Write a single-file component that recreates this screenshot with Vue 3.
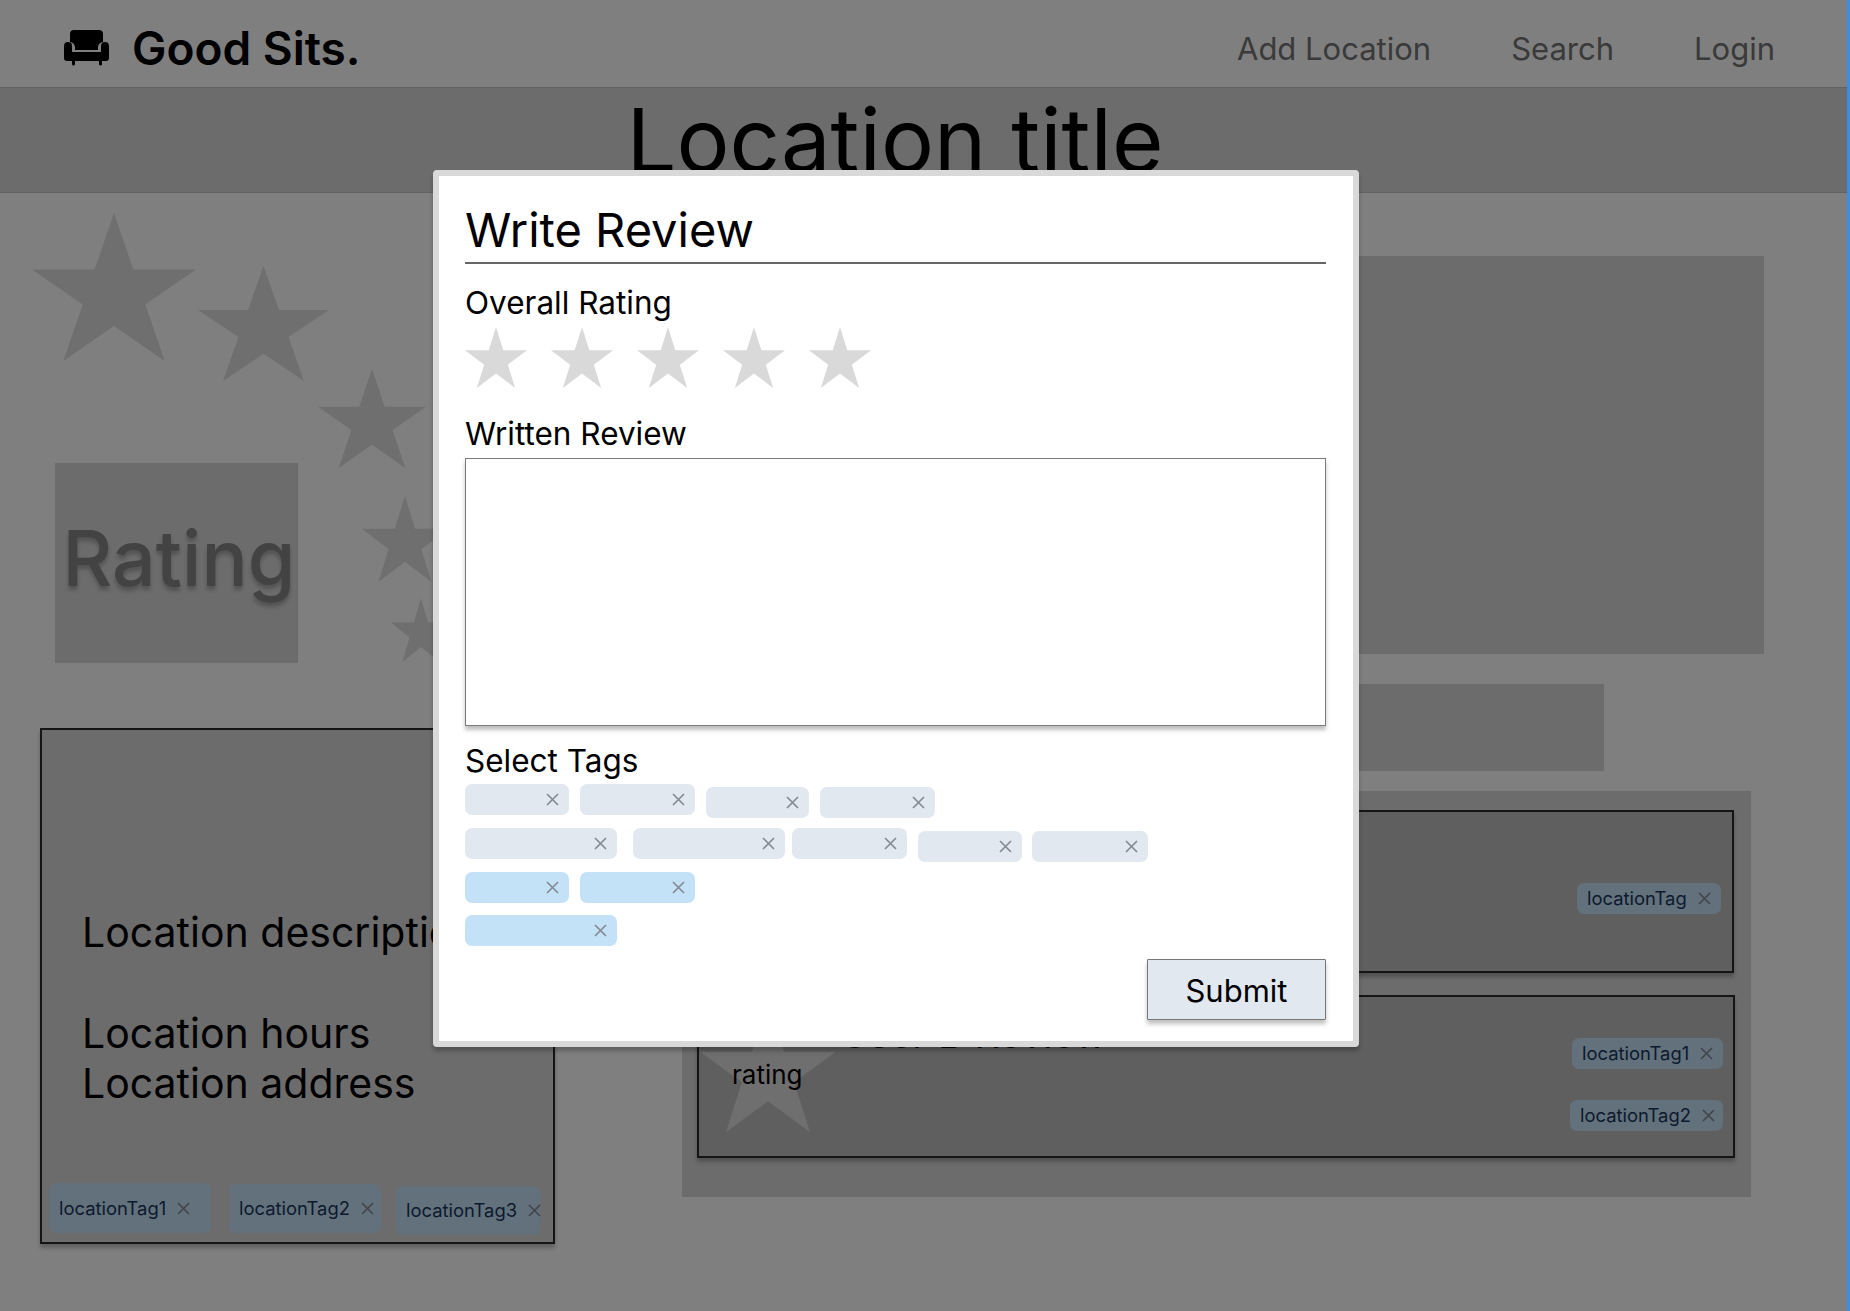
<script setup>
import { ref } from "vue";

const heroStars = [
  { x: 32, y: 20, w: 164, h: 148 },
  { x: 198, y: 73, w: 131, h: 115 },
  { x: 318, y: 176, w: 108, h: 99 },
  { x: 362, y: 303, w: 86, h: 86 },
  { x: 391, y: 405, w: 60, h: 64 }
];

const locationTags = [
  { label: "locationTag1", width: 162, height: 50, left: 0, top: 0 },
  { label: "locationTag2", width: 152, height: 49, left: 18, top: 1 },
  { label: "locationTag3", width: 144, height: 49, left: 15, top: 3 }
];

const tagRows = ref([
  [
    { width: 104 },
    { width: 115, left: 11 },
    { width: 103, left: 11, top: 3 },
    { width: 115, left: 11, top: 3 }
  ],
  [
    { width: 152 },
    { width: 152, left: 16 },
    { width: 115, left: 7 },
    { width: 104, left: 11, top: 3 },
    { width: 116, left: 10, top: 3 }
  ],
  [
    { width: 104, active: true },
    { width: 115, left: 11, active: true }
  ],
  [{ width: 152, active: true }]
]);

function tagStyle(tag) {
  return {
    width: `${tag.width}px`,
    marginLeft: `${tag.left || 0}px`,
    marginTop: `${tag.top || 0}px`
  };
}
</script>

<template>
  <div class="page">
    <header class="nav">
      <div class="brand">
        <svg class="brand__icon" viewBox="0 0 45 36" aria-hidden="true">
          <path d="M10 0h25a4 4 0 0 1 4 4v8a6 6 0 0 0-5 5v3H11v-3a6 6 0 0 0-5-5V4a4 4 0 0 1 4-4z" />
          <path d="M4 12a4 4 0 0 1 4 4v6h29v-6a4 4 0 0 1 8 0v12a3 3 0 0 1-3 3h-4v3a1.500 1.500 0 0 1-3 0v-3H11v3a1.500 1.500 0 0 1-3 0v-3H3a3 3 0 0 1-3-3V16a4 4 0 0 1 4-4z" />
        </svg>
        <span>Good Sits.</span>
      </div>
      <nav class="nav__links">
        <a>Add Location</a>
        <a>Search</a>
        <a>Login</a>
      </nav>
    </header>

    <div class="title-band">
      <h1>Location title</h1>
    </div>

    <main class="main">
      <section class="left">
        <div class="rating-area">
          <svg
            v-for="(star, i) in heroStars"
            :key="i"
            class="hero-star"
            :style="{ left: star.x - 40 + 'px', top: star.y + 'px', width: star.w + 'px', height: star.h + 'px' }"
            viewBox="0 0 100 100"
            preserveAspectRatio="none"
            aria-hidden="true"
          >
            <polygon points="50,0 61.8,38.2 100,38.2 69.1,61.8 80.9,100 50,76.4 19.1,100 30.9,61.8 0,38.2 38.2,38.2" />
          </svg>
          <div class="rating-box">Rating</div>
        </div>

        <article class="info-card">
          <p>Location description</p>
          <p class="info-card__gap">Location hours</p>
          <p>Location address</p>
          <div class="info-card__tags">
            <span
              v-for="tag in locationTags"
              :key="tag.label"
              class="tag tag--blue"
              :style="{ ...tagStyle(tag), height: tag.height + 'px' }"
            >
              {{ tag.label }}
              <svg class="tag__x" viewBox="0 0 13 13" aria-hidden="true"><path d="M1 1l11 11M12 1L1 12" /></svg>
            </span>
          </div>
        </article>
      </section>

      <section class="right">
        <div class="photo"></div>
        <div class="photo-strip"></div>
        <div class="reviews">
          <article class="review">
            <div class="review__rating">
              <svg viewBox="0 0 100 100" preserveAspectRatio="none" aria-hidden="true">
                <polygon points="50,0 61.8,38.2 100,38.2 69.1,61.8 80.9,100 50,76.4 19.1,100 30.9,61.8 0,38.2 38.2,38.2" />
              </svg>
              <span>rating</span>
            </div>
            <h3>User A Review</h3>
            <div class="review__tags review__tags--one">
              <span class="tag tag--blue tag--small" style="width: 144px">
                locationTag
                <svg class="tag__x" viewBox="0 0 13 13" aria-hidden="true"><path d="M1 1l11 11M12 1L1 12" /></svg>
              </span>
            </div>
          </article>
          <article class="review review--second">
            <div class="review__rating">
              <svg viewBox="0 0 100 100" preserveAspectRatio="none" aria-hidden="true">
                <polygon points="50,0 61.8,38.2 100,38.2 69.1,61.8 80.9,100 50,76.4 19.1,100 30.9,61.8 0,38.2 38.2,38.2" />
              </svg>
              <span>rating</span>
            </div>
            <h3>User B Review</h3>
            <div class="review__tags">
              <span class="tag tag--blue tag--small" style="width: 151px">
                locationTag1
                <svg class="tag__x" viewBox="0 0 13 13" aria-hidden="true"><path d="M1 1l11 11M12 1L1 12" /></svg>
              </span>
              <span class="tag tag--blue tag--small" style="width: 153px">
                locationTag2
                <svg class="tag__x" viewBox="0 0 13 13" aria-hidden="true"><path d="M1 1l11 11M12 1L1 12" /></svg>
              </span>
            </div>
          </article>
        </div>
      </section>
    </main>

    <div class="overlay">
      <form class="modal" @submit.prevent>
        <h2>Write Review</h2>

        <label class="modal__label modal__label--first">Overall Rating</label>
        <div class="modal__stars">
          <svg v-for="n in 5" :key="n" viewBox="0 0 100 100" preserveAspectRatio="none" aria-hidden="true">
            <polygon points="50,0 61.8,38.2 100,38.2 69.1,61.8 80.9,100 50,76.4 19.1,100 30.9,61.8 0,38.2 38.2,38.2" />
          </svg>
        </div>

        <label class="modal__label modal__label--review">Written Review</label>
        <textarea class="modal__text"></textarea>

        <label class="modal__label modal__label--tags">Select Tags</label>
        <div class="tag-rows">
          <div v-for="(row, r) in tagRows" :key="r" class="tag-row">
            <span
              v-for="(tag, i) in row"
              :key="i"
              class="tag tag--empty"
              :class="{ 'tag--blue': tag.active }"
              :style="tagStyle(tag)"
            >
              <svg class="tag__x" viewBox="0 0 13 13" aria-hidden="true"><path d="M1 1l11 11M12 1L1 12" /></svg>
            </span>
          </div>
        </div>

        <button class="modal__submit" type="submit">Submit</button>
      </form>
    </div>
  </div>
</template>

<style>
html,
body {
  margin: 0;
  overflow: hidden;
}
</style>

<style scoped>
.page {
  position: relative;
  height: 1311px;
  overflow: hidden;
  box-sizing: border-box;
  border-right: 3px solid #3b8ee0;
  background: #fff;
  color: #000;
  font-family: Inter, "Liberation Sans", sans-serif;
}

.nav {
  height: 87px;
  box-sizing: content-box;
  display: flex;
  align-items: center;
  justify-content: space-between;
  padding: 0 72px 0 64px;
  border-bottom: 1px solid #c4c4c4;
}

.brand {
  display: flex;
  align-items: center;
  gap: 23px;
  margin-top: 9px;
  font-size: 46px;
  font-weight: 600;
}

.brand__icon {
  width: 45px;
  height: 36px;
  fill: #000;
}

.nav__links {
  display: flex;
  gap: 80px;
  margin-top: 9px;
  font-size: 31px;
  color: #747474;
}

.title-band {
  height: 105px;
  box-sizing: border-box;
  border-bottom: 1px solid #c4c4c4;
  background: #d9d9d9;
  text-align: center;
}

.title-band h1 {
  margin: 0;
  padding: 1px 57px 0 0;
  font-size: 88.5px;
  font-weight: 400;
  line-height: 102px;
}

.main {
  display: grid;
  grid-template-columns: 515px 1fr;
  column-gap: 127px;
  padding-left: 40px;
}

.rating-area {
  position: relative;
  height: 535px;
}

.hero-star {
  position: absolute;
  fill: #dedede;
}

.rating-box {
  position: absolute;
  left: 15px;
  top: 270px;
  width: 243px;
  height: 200px;
  padding: 0 0 10px 5px;
  box-sizing: border-box;
  display: flex;
  align-items: center;
  justify-content: center;
  background: #d9d9d9;
  color: #868686;
  font-size: 77px;
  font-weight: 500;
  text-shadow: 0 4px 4px rgba(0, 0, 0, 0.25);
}

.info-card {
  position: relative;
  height: 516px;
  box-sizing: border-box;
  padding: 177px 0 0 40px;
  border: 2px solid #2a2a2a;
  background: #d9d9d9;
  box-shadow: 0 4px 4px rgba(0, 0, 0, 0.25);
  font-size: 41px;
  line-height: 50.5px;
}

.info-card p {
  margin: 0;
}

.info-card__gap {
  margin-top: 50px !important;
}

.info-card__tags {
  position: absolute;
  left: 7px;
  bottom: 7px;
  display: flex;
  align-items: flex-start;
}

.tag {
  display: flex;
  flex: none;
  align-items: center;
  gap: 11px;
  height: 31px;
  box-sizing: border-box;
  padding-left: 10px;
  border-radius: 7px;
  background: #e2e8f0;
  color: #1a365d;
  font-size: 18.4px;
  line-height: 1;
  white-space: nowrap;
}

.tag--blue {
  background: #c4e2f7;
}

.tag--empty {
  justify-content: flex-end;
  padding: 0 10px 0 0;
}

.tag__x {
  flex: none;
  width: 13px;
  height: 13px;
  fill: none;
  stroke: #858b93;
  stroke-width: 1.7;
}

.photo {
  height: 398px;
  margin: 63px 83px 0 0;
  background: #d9d9d9;
}

.photo-strip {
  height: 87px;
  margin: 30px 243px 0 0;
  background: #d9d9d9;
}

.reviews {
  height: 406px;
  margin: 20px 96px 0 0;
  padding: 19px 17px 0 15px;
  box-sizing: border-box;
  background: #d9d9d9;
}

.review {
  display: flex;
  height: 163px;
  box-sizing: border-box;
  border: 2px solid #2a2a2a;
  background: #c1bfbf;
  box-shadow: 0 4px 4px rgba(0, 0, 0, 0.25);
}

.review--second {
  margin: 22px -1px 0 0;
}

.review__rating {
  position: relative;
  flex: none;
  width: 136px;
  height: 130px;
  margin: 5px 0 0 1px;
}

.review__rating svg {
  display: block;
  width: 100%;
  height: 100%;
  fill: #dedede;
}

.review__rating span {
  position: absolute;
  left: 32px;
  top: 56px;
  font-size: 26px;
  line-height: 34px;
}

.review h3 {
  margin: 13px 0 0 4px;
  font-size: 39px;
  font-weight: 400;
  line-height: 48px;
}

.review__tags {
  margin: 41px 10px 0 auto;
  display: flex;
  flex-direction: column;
  align-items: flex-end;
  gap: 31px;
}

.review__tags--one {
  margin-top: 71px;
  margin-right: 11px;
}

.tag--small {
  height: 31px;
}

.overlay {
  position: absolute;
  inset: 0;
  background: rgba(0, 0, 0, 0.5);
}

.modal {
  position: absolute;
  left: 433px;
  top: 170px;
  width: 926px;
  height: 877px;
  box-sizing: border-box;
  display: flex;
  flex-direction: column;
  padding: 25px 27px 0 26px;
  border: 6px solid #d9d9d9;
  border-radius: 4px;
  background: #fff;
  box-shadow: 0 4px 4px rgba(0, 0, 0, 0.25);
}

.modal h2 {
  margin: 0;
  padding-bottom: 3px;
  border-bottom: 2px solid #666;
  font-size: 47px;
  font-weight: 400;
  line-height: 58px;
}

.modal__label {
  display: block;
  font-size: 31.5px;
  line-height: 38px;
}

.modal__label--first {
  margin-top: 20px;
}

.modal__label--review {
  margin-top: 27px;
}

.modal__label--tags {
  margin-top: 16px;
}

.modal__stars {
  display: flex;
  gap: 24px;
  margin-top: 5px;
}

.modal__stars svg {
  width: 62px;
  height: 61px;
  fill: #d9d9d9;
}

.modal__text {
  display: block;
  height: 268px;
  margin-top: 5px;
  box-sizing: border-box;
  border: 1px solid #7a7a7a;
  background: #fff;
  box-shadow: 0 4px 4px rgba(0, 0, 0, 0.25);
  resize: none;
  outline: none;
}

.tag-rows {
  display: flex;
  flex-direction: column;
  gap: 12.75px;
  margin-top: 4px;
}

.tag-row {
  display: flex;
  height: 31px;
}

.modal__submit {
  align-self: flex-end;
  width: 179px;
  height: 61px;
  margin-top: 13px;
  padding-top: 3px;
  border: 1px solid #777;
  border-radius: 1px;
  background: #e2e8f0;
  box-shadow: 0 4px 4px rgba(0, 0, 0, 0.25);
  color: #000;
  font-family: inherit;
  font-size: 31px;
}
</style>
